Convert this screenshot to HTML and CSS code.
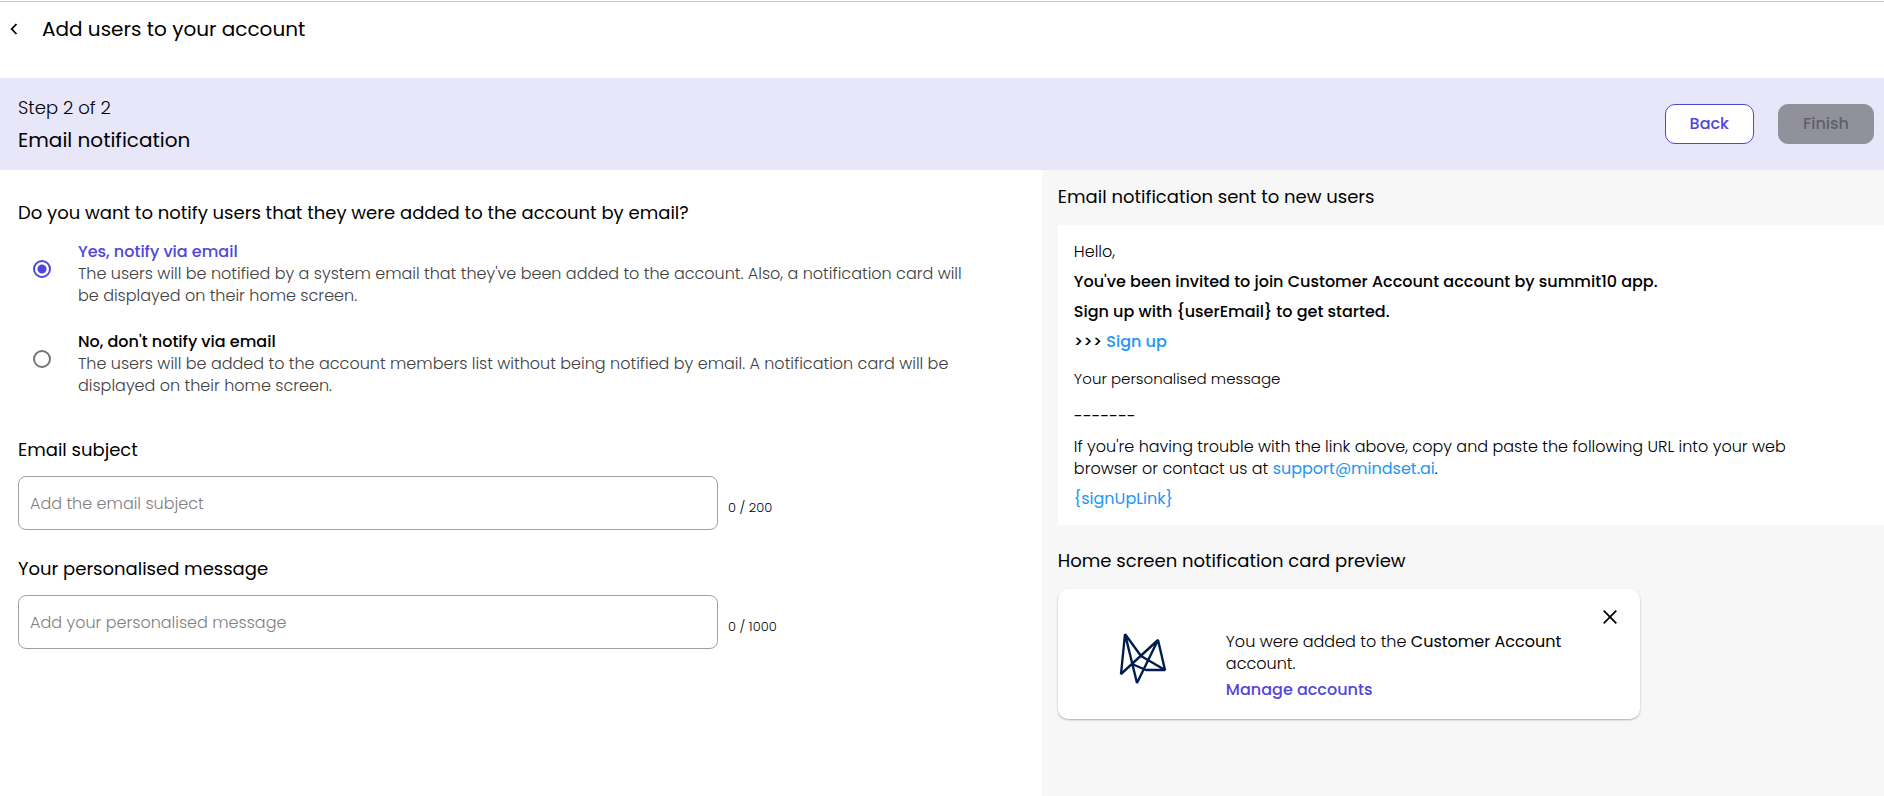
FILE: index.html
```html
<!DOCTYPE html>
<html lang="en">
<head>
<meta charset="utf-8">
<meta name="viewport" content="width=device-width, initial-scale=1">
<title>Add users to your account</title>
<link rel="stylesheet" href="styles.css">
</head>
<body>
<header class="topbar">
  <button class="icon-button" type="button" aria-label="Go back">
    <svg width="8" height="12" viewBox="0 0 8 12" fill="none" stroke="currentColor" stroke-width="1.8"><path d="M6.5 1 1.7 6l4.8 5"/></svg>
  </button>
  <h1 class="page-title">Add users to your account</h1>
</header>

<section class="stepbar">
  <div>
    <p class="step-count">Step 2 of 2</p>
    <h2 class="step-title">Email notification</h2>
  </div>
  <div class="step-actions">
    <button class="button button-outline" type="button">Back</button>
    <button class="button button-disabled" type="button" disabled>Finish</button>
  </div>
</section>

<main class="content">
  <form class="settings">
    <fieldset class="choices">
      <legend class="heading">Do you want to notify users that they were added to the account by email?</legend>
      <label class="choice">
        <input class="radio" type="radio" name="notify" value="yes" checked>
        <span class="choice-text">
          <span class="choice-title">Yes, notify via email</span>
          <span class="choice-info">The users will be notified by a system email that they've been added to the account. Also, a notification card will be displayed on their home screen.</span>
        </span>
      </label>
      <label class="choice">
        <input class="radio" type="radio" name="notify" value="no">
        <span class="choice-text">
          <span class="choice-title">No, don't notify via email</span>
          <span class="choice-info">The users will be added to the account members list without being notified by email. A notification card will be displayed on their home screen.</span>
        </span>
      </label>
    </fieldset>

    <div class="field">
      <label class="heading" for="subject">Email subject</label>
      <div class="field-row">
        <input class="text-input" id="subject" type="text" maxlength="200" placeholder="Add the email subject">
        <span class="counter">0 / 200</span>
      </div>
    </div>
    <div class="field">
      <label class="heading" for="message">Your personalised message</label>
      <div class="field-row">
        <input class="text-input" id="message" type="text" maxlength="1000" placeholder="Add your personalised message">
        <span class="counter">0 / 1000</span>
      </div>
    </div>
  </form>

  <aside class="preview">
    <h3 class="heading">Email notification sent to new users</h3>
    <article class="email">
      <p>Hello,</p>
      <p class="strong">You've been invited to join Customer Account account by summit10 app.</p>
      <p class="strong">Sign up with {userEmail} to get started.</p>
      <p class="strong">&gt;&gt;&gt; <a class="email-link" href="#signup">Sign up</a></p>
      <p class="email-note">Your personalised message</p>
      <p class="email-rule">-------</p>
      <p>If you're having trouble with the link above, copy and paste the following URL into your web browser or contact us at <a class="email-link" href="mailto:support@mindset.ai">support@mindset.ai</a>.</p>
      <p><a class="email-link" href="#signup">{signUpLink}</a></p>
    </article>

    <h3 class="heading">Home screen notification card preview</h3>
    <article class="card">
      <svg class="card-logo" width="48" height="53" viewBox="0 0 48 53" fill="none" stroke="#001d50" stroke-width="2.4" stroke-linejoin="bevel"><path d="M6 2 2 42 39 8 46 38 27 38 13 32M6 2 22 24 46 38M6 2 18 51 39 8"/></svg>
      <div class="card-body">
        <p>You were added to the <span class="card-name">Customer Account</span> account.</p>
        <a class="card-link" href="#accounts">Manage accounts</a>
      </div>
      <button class="icon-button card-close" type="button" aria-label="Close">
        <svg width="14" height="14" viewBox="0 0 14 14" fill="none" stroke="currentColor" stroke-width="1.7"><path d="M.7.7l12.6 12.6M13.3.7.7 13.3"/></svg>
      </button>
    </article>
  </aside>
</main>
</body>
</html>
```

FILE: styles.css
```css
* {
  box-sizing: border-box;
}

body {
  margin: 0;
  min-height: 100vh;
  display: flex;
  flex-direction: column;
  padding-top: 1px;
  background: #fff;
  color: #000;
  font: 300 16px/22px Poppins, Inter, "Open Sans", sans-serif;
}

h1, h2, h3, p, fieldset {
  margin: 0;
  padding: 0;
  border: 0;
}

button, input {
  font: inherit;
}

a {
  text-decoration: none;
}

.icon-button {
  display: grid;
  place-items: center;
  padding: 0;
  border: 0;
  background: none;
  color: #000;
}

.topbar {
  display: flex;
  align-items: center;
  gap: 24px;
  padding: 11px 10px 33px;
  border-top: 1px solid #c8c8c8;
}

.page-title, .step-title {
  font-size: 20px;
  line-height: 32px;
  font-weight: 400;
}

.stepbar {
  display: flex;
  justify-content: space-between;
  align-items: center;
  padding: 14px 10px 14px 18px;
  background: #e8e7fa;
}

.step-count {
  font-size: 18px;
  line-height: 32px;
}

.step-actions {
  display: flex;
  gap: 24px;
}

.button {
  height: 40px;
  padding: 0 24px;
  border: 1px solid #4f46dc;
  border-radius: 10px;
  font-weight: 500;
}

.button-outline {
  background: #fff;
  color: #4f46dc;
}

.button-disabled {
  border-color: #91919b;
  background: #91919b;
  color: #5f5f67;
}

.content {
  flex: 1;
  display: grid;
  grid-template-columns: 553fr 447fr;
}

.heading {
  display: block;
  padding: 0;
  font-size: 18px;
  line-height: 28px;
  font-weight: 400;
}

.settings {
  padding: 29px 60px 24px 18px;
}

.choices {
  display: grid;
  gap: 24px;
  margin-bottom: 39px;
}

.choices .heading {
  margin-bottom: 14px;
}

.choice {
  display: flex;
  gap: 27px;
  padding-left: 15px;
}

.radio {
  appearance: none;
  flex: none;
  width: 18px;
  height: 18px;
  margin: 19px 0 0;
  border: 2px solid #757575;
  border-radius: 50%;
}

.radio:checked {
  border-color: #4f46dc;
  background: radial-gradient(circle, #4f46dc 4px, transparent 5px);
}

.choice-title, .choice-info {
  display: block;
}

.choice-title {
  font-weight: 500;
}

.radio:checked + .choice-text .choice-title {
  color: #4f46dc;
}

.choice-info {
  color: #404040;
}

.field {
  margin-bottom: 25px;
}

.field-row {
  display: flex;
  align-items: center;
  gap: 10px;
  margin-top: 12px;
}

.text-input {
  width: 700px;
  height: 54px;
  padding: 0 11px;
  border: 1px solid #a0a0a0;
  border-radius: 8px;
  background: #fff;
}

.text-input::placeholder {
  color: #808080;
  opacity: 1;
}

.counter {
  padding-top: 9px;
  font-size: 13px;
  line-height: 20px;
}

.preview {
  padding: 13px 0 24px 16px;
  background: #f7f7f7;
}

.email {
  display: grid;
  gap: 8px;
  margin: 14px 0 22px;
  padding: 16px 64px 15px 16px;
  background: #fff;
}

.strong {
  font-weight: 500;
}

.email-link {
  color: #2196f3;
  font-weight: 400;
}

.strong .email-link {
  font-weight: 500;
}

.email-note {
  padding: 7px 0 8px;
  font-size: 15px;
}

.email-rule {
  font-weight: 400;
}

.card {
  position: relative;
  display: flex;
  align-items: center;
  width: 582px;
  min-height: 130px;
  margin-top: 14px;
  padding: 16px 64px 8px 61px;
  border-radius: 10px;
  background: #fff;
  box-shadow: 0 1px 2px rgba(0, 0, 0, 0.3);
}

.card-logo {
  flex: none;
}

.card-body {
  margin: 15px 0 0 59px;
}

.card-name {
  font-weight: 400;
}

.card-link {
  display: block;
  margin-top: 4px;
  color: #4f46dc;
  font-weight: 500;
}

.card-close {
  position: absolute;
  top: 16px;
  right: 18px;
  width: 24px;
  height: 24px;
}
```
